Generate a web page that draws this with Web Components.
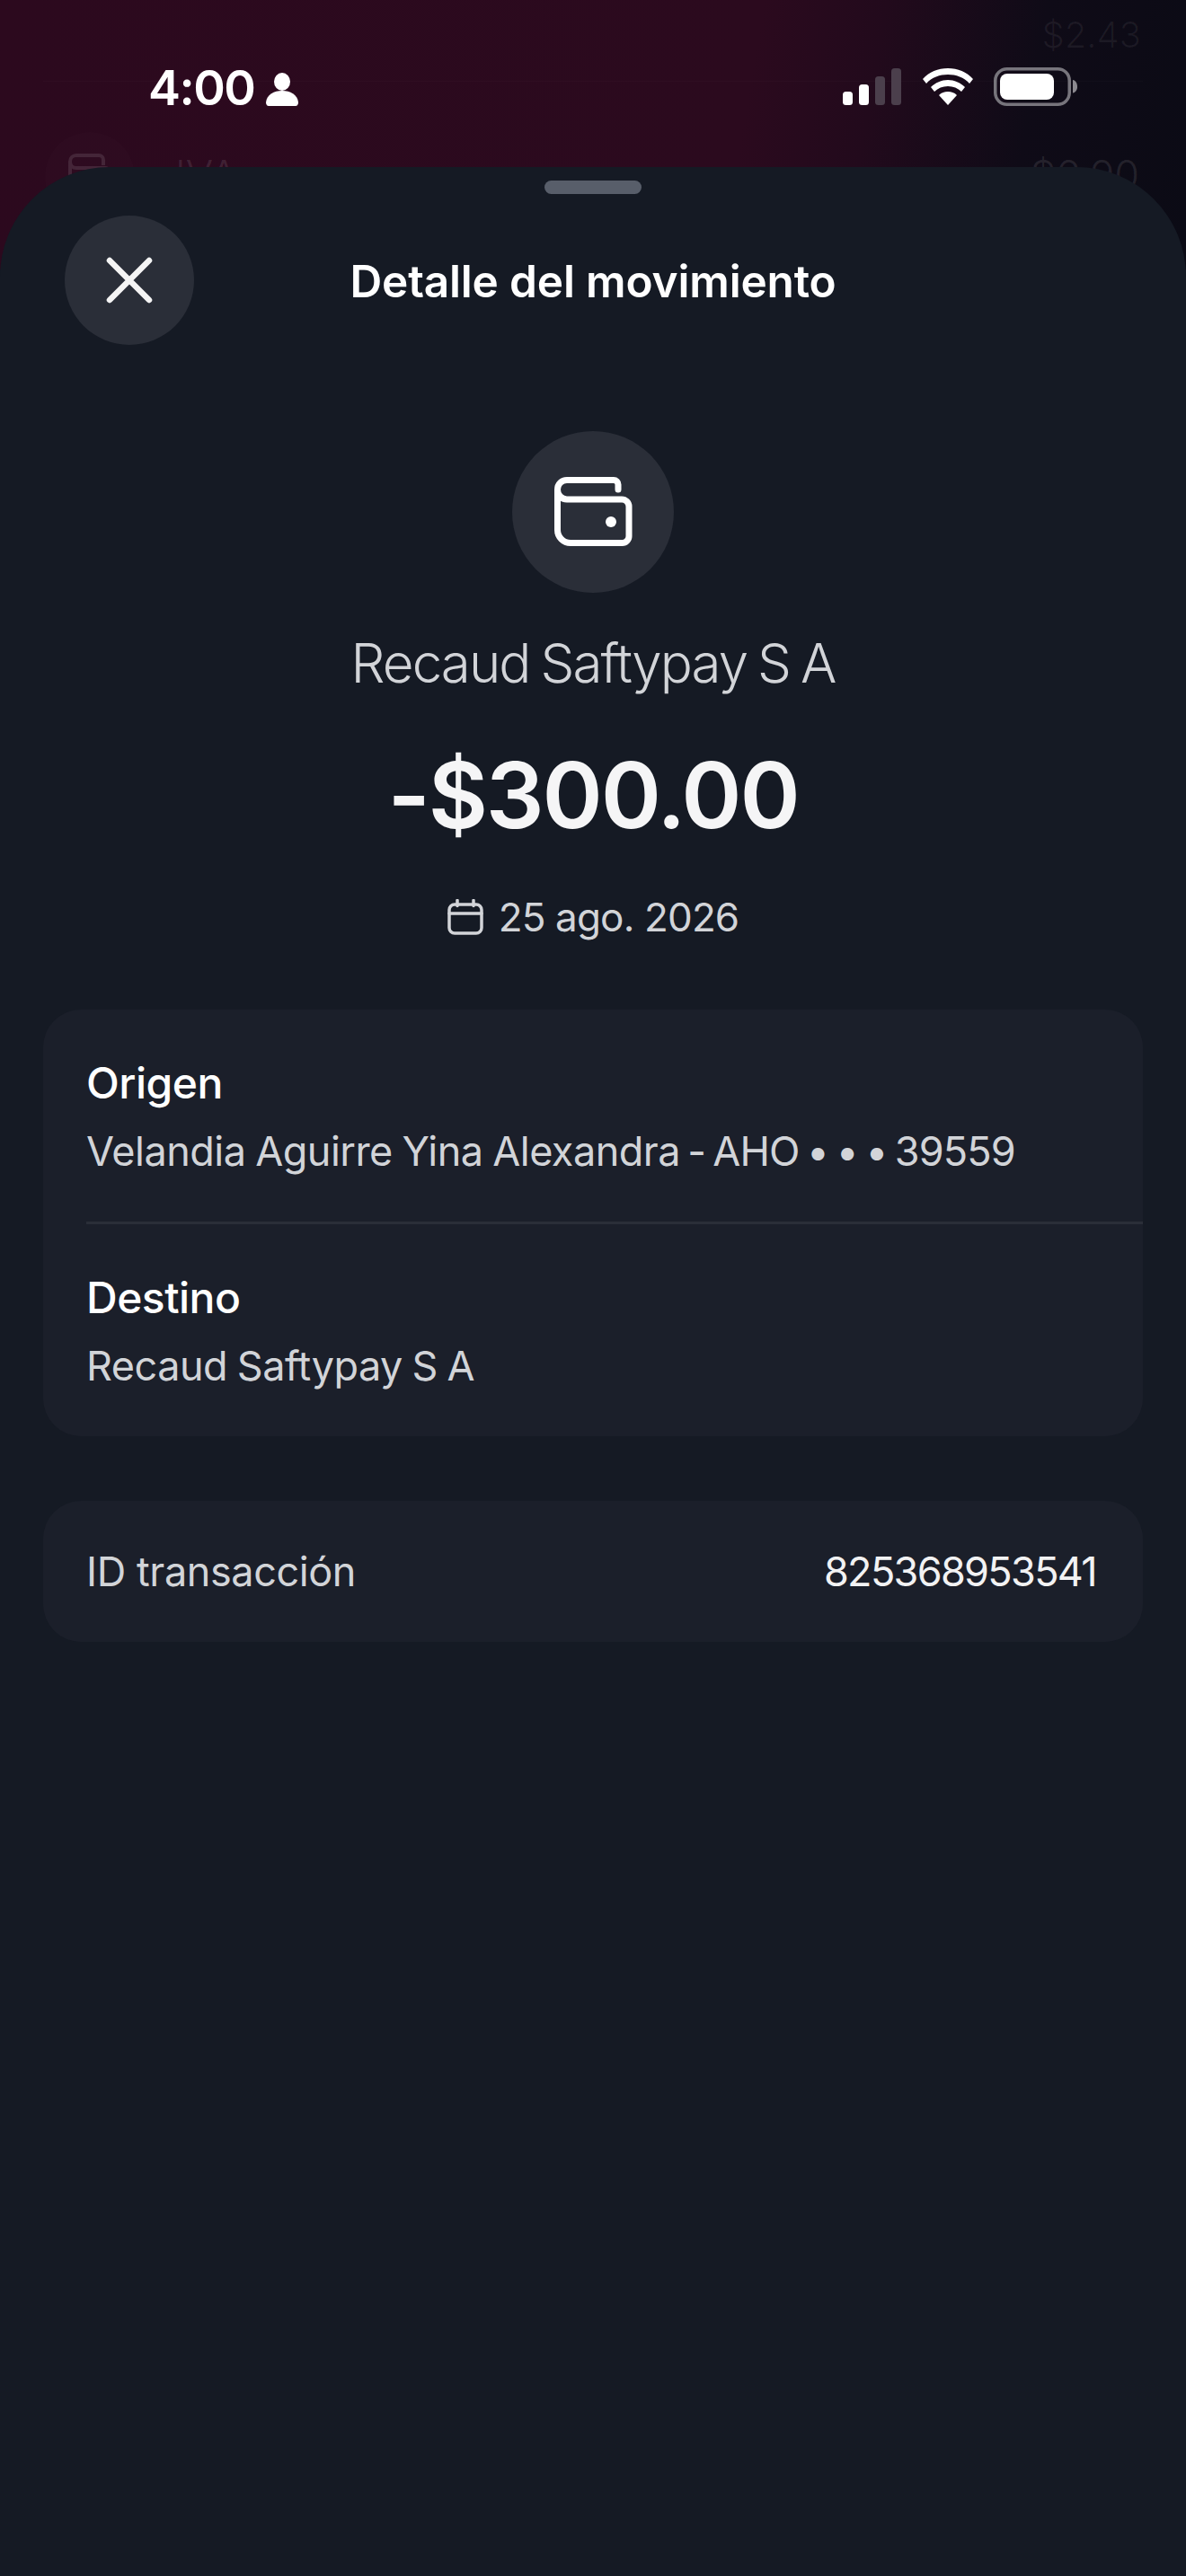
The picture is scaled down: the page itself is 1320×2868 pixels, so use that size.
<!DOCTYPE html>
<html lang="es"><head><meta charset="utf-8"><title>Detalle del movimiento</title>
<style>
html,body{margin:0;padding:0;background:#151a24}
body{font-family:Inter,"Noto Sans",sans-serif}
</style></head>
<body>
<phone-screen>
  <ghost-list slot="back"></ghost-list>
  <status-bar slot="status" time="4:00"></status-bar>
  <bottom-sheet slot="sheet">
    <sheet-header title="Detalle del movimiento"></sheet-header>
    <movement-hero name="Recaud Saftypay S A" amount="-$300.00" date="25 ago. 2026"></movement-hero>
    <info-card>
      <party-row label="Origen" value="Velandia Aguirre Yina Alexandra" tail=" - AHO • • • 39559"></party-row>
      <party-row divided label="Destino" value="Recaud Saftypay S A"></party-row>
    </info-card>
    <info-card spaced>
      <id-row label="ID transacción" value="825368953541"></id-row>
    </info-card>
  </bottom-sheet>
</phone-screen>
<script>
function def(name, html){
  customElements.define(name, class extends HTMLElement{
    constructor(){super();this.attachShadow({mode:'open'});}
    connectedCallback(){
      const a=n=>this.getAttribute(n)||'';
      this.shadowRoot.innerHTML=html(a);
    }
  });
}
def('phone-screen',()=>`<style>
:host{display:flex;flex-direction:column;position:relative;width:1320px;height:2868px;overflow:hidden;
background:#151a24 linear-gradient(100deg,#2c091e 0%,#2b0a1e 62%,#220a1c 72%,#0f0b17 85%,#0b0b15 100%) top/100% 300px no-repeat}
.back{position:absolute;left:0;right:0;top:0}
.front{position:relative;display:flex;flex-direction:column;flex:1;min-height:0}
</style><div class="back"><slot name="back"></slot></div>
<div class="front"><slot name="status"></slot><slot name="sheet"></slot></div>`);

def('ghost-list',()=>`<style>
:host{display:block;height:300px;overflow:hidden;color:rgba(255,255,255,.06);font:300 40px/54px Inter,sans-serif}
.r1{display:flex;justify-content:flex-end;margin-top:12px;padding-right:50px}
.line{height:1px;margin:24px 48px 0;background:rgba(255,255,255,.02)}
.r2{display:flex;align-items:center;justify-content:space-between;margin-top:56px;padding:0 52px 0 50px;height:100px}
.left{display:flex;align-items:center;gap:45px;color:rgba(255,255,255,.11)}
.c{width:100px;height:100px;border-radius:50%;background:rgba(255,255,255,.012);display:flex;align-items:center;justify-content:center}
.t{font-size:45px;margin-bottom:5px}
.amt{color:rgba(255,255,255,.1)}
svg{display:block}
</style>
<div class="r1"><span>$2.43</span></div><div class="line"></div>
<div class="r2"><div class="left"><div class="c"><svg width="50" height="54" viewBox="0 0 50 54" fill="none" stroke="currentColor" stroke-width="4"><path d="M40 14V8a5 5 0 0 0-5-5H10C6 3 3 6 3 10s3 7 7 7H42a5 5 0 0 1 5 5V51H10a7 7 0 0 1-7-7V10"/></svg></div><span class="t">IVA</span></div><span class="t amt">$6.90</span></div>`);

def('status-bar',a=>`<style>
:host{display:flex;flex:none;height:186px;box-sizing:border-box;padding:0 121px 0 165px;align-items:flex-start;justify-content:space-between;color:#fff}
.l{display:flex;align-items:center;gap:13px;height:60px;margin-top:68px;font:600 54px/60px Inter,sans-serif;letter-spacing:-1.5px}
.r{display:flex;align-items:flex-start;margin-top:75px}
svg{display:block}
.wifi{margin-left:23px}.bat{margin-left:22px}
.p{margin-top:2px}
</style>
<div class="l"><span>${a('time')}</span><svg class="p" width="36" height="37" viewBox="0 0 36 37" fill="#fff"><ellipse cx="18" cy="10" rx="9" ry="10"/><path d="M0 33c1-9 9-13 18-13s17 4 18 13c0 2-1 4-3 4H3c-2 0-3-2-3-4z"/></svg></div>
<div class="r">
<svg width="66" height="42" viewBox="0 0 66 42"><rect x="1" y="27" width="11" height="15" rx="3.500" fill="#fff"/><rect x="19" y="19" width="11" height="23" rx="3.500" fill="#fff"/><rect x="37" y="10" width="11" height="32" rx="3.500" fill="#4b3f4c"/><rect x="55" y="1" width="11" height="41" rx="3.500" fill="#4b3f4c"/></svg>
<svg class="wifi" width="58" height="42" viewBox="0 0 58 42" fill="#fff"><path d="M29 1C18 1 8 5 1 13l4 5C11 11 20 8 29 8s18 3 24 10l4-5C50 5 40 1 29 1z"/><path d="M29 14c-7 0-14 3-19 8l4 5c4-4 9-6 15-6s11 2 15 6l4-5c-5-5-12-8-19-8z"/><path d="M29 27c-4 0-7 1-10 4l10 11 10-11c-3-3-6-4-10-4z"/></svg>
<svg class="bat" width="93" height="43" viewBox="0 0 93 43"><rect x="1.750" y="1.750" width="82.500" height="39.500" rx="13" fill="none" stroke="#77757c" stroke-width="3.500"/><rect x="7" y="7" width="60" height="29" rx="8" fill="#fff"/><path d="M88 14c3 .5 5 3.500 5 7.500s-2 6.500-5 7z" fill="#8c8a90"/></svg>
</div>`);

def('bottom-sheet',()=>`<style>
:host{display:flex;flex-direction:column;flex:1;min-height:0;box-sizing:border-box;background:#151a24;border-radius:122px 122px 0 0}
.handle{flex:none;width:108px;height:15px;border-radius:8px;background:#585e6a;margin:15px auto 0}
</style><div class="handle"></div><slot></slot>`);

def('sheet-header',a=>`<style>
:host{display:grid;grid-template-columns:144px 1fr 144px;align-items:center;padding:24px 72px 0}
.x{width:144px;height:144px;border-radius:50%;background:#2a2e38;display:flex;align-items:center;justify-content:center}
h1{margin:0;position:relative;top:1px;text-align:center;color:#fff;font:600 49.500px/60px Inter,sans-serif;letter-spacing:-.15px}
svg{display:block}
</style><div class="x"><svg width="52" height="52" viewBox="0 0 52 52" fill="none" stroke="#f4f4f4" stroke-width="6.500" stroke-linecap="round"><path d="M4 4l44 44M48 4L4 48"/></svg></div><h1>${a('title')}</h1><div></div>`);

def('movement-hero',a=>`<style>
:host{display:flex;flex-direction:column;align-items:center;padding-top:96px;height:740px;box-sizing:border-box}
.av{width:180px;height:180px;border-radius:50%;background:#2a2e38;display:flex;align-items:center;justify-content:center}
.name{margin-top:42px;font:300 60px/72px Inter,sans-serif;letter-spacing:-1.9px;word-spacing:-3px;color:#d2d4d8}
.amt{margin-top:51px;font:600 102px/120px Inter,sans-serif;letter-spacing:-2.2px;color:#f5f5f6}
.date{margin-top:48px;display:flex;align-items:center;gap:17px;font:400 44px/56px Inter,sans-serif;letter-spacing:-.85px;color:#d2d4d8}
svg{display:block}
</style>
<div class="av"><svg width="88" height="80" viewBox="0 0 88 80" fill="none" stroke="#fff" stroke-width="7" stroke-linecap="round" stroke-linejoin="round"><path d="M72 15V9.500a5 5 0 0 0-5-5H15C9 4.500 4.500 9 4.500 15S9 26 15 26H76a8 8 0 0 1 8 8V67a7.500 7.500 0 0 1-7.500 7.500H19A14.500 14.500 0 0 1 4.500 60V15"/><circle cx="64" cy="51" r="6" fill="#fff" stroke="none"/></svg></div>
<div class="name">${a('name')}</div>
<div class="amt">${a('amount')}</div>
<div class="date"><svg width="40" height="40" viewBox="0 0 40 40" fill="none" stroke="#d2d4d8" stroke-width="3.500" stroke-linecap="round" stroke-linejoin="round"><rect x="2" y="6" width="36" height="32" rx="6"/><path d="M2 16h36M11 1.500v6M29 1.500v6"/></svg><span>${a('date')}</span></div>`);

def('info-card',()=>`<style>
:host{display:block;margin:0 48px;background:#1b1f2a;border-radius:42px;overflow:hidden}
:host([spaced]){margin-top:72px}
</style><slot></slot>`);

def('party-row',a=>`<style>
:host{display:block;padding-left:48px}
.in{padding:52px 0 48px}
.rule{display:none;height:3px;background:#2a2e38}
:host([divided]) .rule{display:block}
.l{font:500 48px/60px Inter,sans-serif;letter-spacing:-.5px;color:#fff}
.v{margin-top:16px;font:400 45px/60px Inter,sans-serif;letter-spacing:-.5px;word-spacing:-1.5px;color:#d2d4d8}
.tail{letter-spacing:-.9px;word-spacing:-3.500px}
</style><div class="rule"></div><div class="in"><div class="l">${a('label')}</div><div class="v">${a('value')}<span class="tail">${a('tail')}</span></div></div>`);

def('id-row',a=>`<style>
:host{display:flex;justify-content:space-between;align-items:center;height:157px;padding:0 52px 0 48px;font:400 45px/60px Inter,sans-serif}
.l{color:#d2d4d8;letter-spacing:-.4px}.v{color:#f2f2f3;letter-spacing:-1.67px}
</style><span class="l">${a('label')}</span><span class="v">${a('value')}</span>`);
</script>
</body></html>
